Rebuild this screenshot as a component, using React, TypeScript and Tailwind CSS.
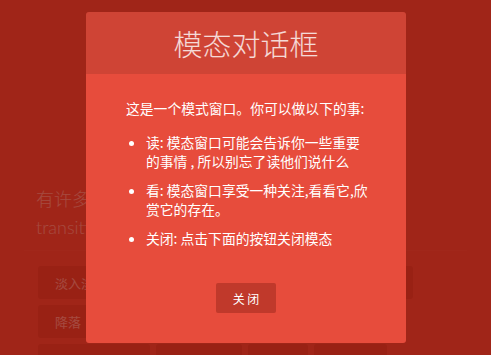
const cjk = "font-['Noto_Sans_CJK_SC','Noto_Sans',sans-serif]";

const rows = [
  ["淡入淡出缩放", "右侧滑入", "底部滑入", "报纸版"],
  ["降落", "侧面降落", "粘性向上", "分裂"],
  ["水平三维翻转", "粘性向上", "分裂", "旋转落"],
];

function Trigger({ label }: { label: string }) {
  return (
    <button className="rounded-[3px] bg-[#c0392b] px-[17px] py-[7px] text-[13px] leading-[19px] text-white whitespace-nowrap">
      {label}
    </button>
  );
}

export default function App() {
  return (
    <div className={`relative h-[355px] w-[491px] overflow-hidden bg-[#e74c3c] ${cjk}`}>
      {/* page behind the overlay */}
      <div className="mx-[24px] border-b border-[#ea5446] px-[12px] pt-[184px] pb-[8px] text-[18px] font-light leading-[29px] text-white">
        <p className="whitespace-nowrap">有许多可能的方式显示模态窗口。这里有</p>
        <p className="whitespace-nowrap font-['Lato',sans-serif]">transitions and animations</p>
      </div>
      <div className="mt-[15px] flex flex-col gap-[6px] pl-[38px]">
        {rows.map((row, i) => (
          <div key={i} className="flex gap-[6px]">
            {row.map((label, j) => (
              <Trigger key={j} label={label} />
            ))}
          </div>
        ))}
      </div>

      <div className="absolute inset-0 bg-[rgba(143,27,15,0.8)]" />

      {/* modal */}
      <div className="absolute top-[12px] left-[86px] w-[320px] overflow-hidden rounded-[3px] bg-[#e74c3c] text-white">
        <h3 className="bg-[rgba(0,0,0,0.1)] py-[12px] text-center text-[29px] font-light leading-[38px] text-white/80">
          模态对话框
        </h3>
        <div className="px-[40px] pt-[15px] pb-[30px] text-[13.8px] leading-[19px]">
          <p className="py-[10px] whitespace-nowrap">这是一个模式窗口。你可以做以下的事:</p>
          <ul className="list-disc pb-[30px] pl-[20px] whitespace-nowrap">
            <li className="py-[5px]">
              读: 模态窗口可能会告诉你一些重要
              <br />
              的事情 , 所以别忘了读他们说什么
            </li>
            <li className="py-[5px]">
              看: 模态窗口享受一种关注,看看它,欣
              <br />
              赏它的存在。
            </li>
            <li className="py-[5px]">关闭: 点击下面的按钮关闭模态</li>
          </ul>
          <button className="mx-auto block h-[30px] w-[60px] rounded-[2px] bg-[#c0392b] text-[12px] text-white">
            关 闭
          </button>
        </div>
      </div>
    </div>
  );
}
